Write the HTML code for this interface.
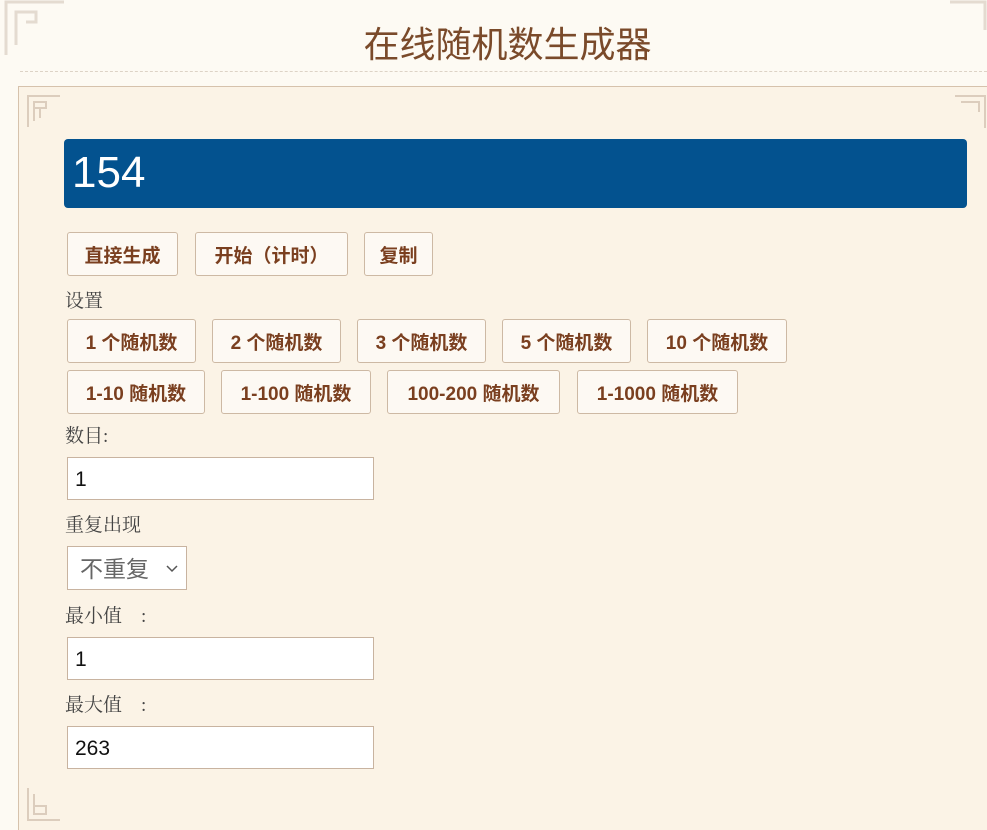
<!DOCTYPE html>
<html><head><meta charset="utf-8"><style>
*{box-sizing:border-box;margin:0;padding:0}
html,body{width:987px;height:830px;overflow:hidden}
body{background:#fdfaf3;font-family:"Liberation Sans","Noto Sans CJK SC",sans-serif;position:relative}
h1{position:absolute;top:16px;left:0;width:1015px;text-align:center;font-weight:normal;font-size:36px;color:#7a4a2a;font-family:"Liberation Sans","Noto Sans CJK SC",sans-serif}
.dash{position:absolute;top:71px;left:20px;width:967px;border-top:1px dashed #ddd3c6}
.panel{position:absolute;top:86px;left:18px;width:1000px;height:760px;background:#fbf3e6;border:1px solid #d6c2ac}
.num{position:absolute;left:64px;top:139px;width:903px;height:69px;background:#03528f;border-radius:4px;color:#fff;font-size:44px;padding:10px 0 0 8px;line-height:48px}
.btn{position:absolute;height:44px;border:1px solid #cdb9a4;border-radius:3px;background:#fdf9f3;color:#7a3f1f;font-weight:bold;font-size:19px;text-align:center;line-height:47px}
.lbl{position:absolute;left:65px;font-size:19px;color:#444;font-family:"Liberation Serif","Noto Serif CJK SC",serif}
.inp{position:absolute;left:67px;width:307px;height:43px;background:#fff;border:1px solid #c8b3a0;font-size:21px;padding-left:7px;line-height:43px;color:#111}
.sel{position:absolute;left:67px;top:546px;width:120px;height:44px;background:#fff;border:1px solid #c8b3a0;font-size:23px;color:#666;padding-left:12px;line-height:44px}
</style></head><body>
<svg style="position:absolute;left:4px;top:0" width="60" height="56"><g stroke="#e4dbd0" stroke-width="3" fill="none"><path d="M2 55V2h58M12 45V12h20v10H22"/></g></svg>
<svg style="position:absolute;left:950px;top:0" width="37" height="30"><g stroke="#e4dbd0" stroke-width="3" fill="none"><path d="M0 2h35v28"/></g></svg>
<h1>在线随机数生成器</h1>
<div class="dash"></div>
<div class="panel"></div>
<svg style="position:absolute;left:26px;top:94px" width="36" height="34"><g stroke="#dccdbd" stroke-width="2" fill="none"><path d="M2 33V2h32M8 27V8h12v6H8M14 14v10"/></g></svg>
<svg style="position:absolute;left:955px;top:94px" width="32" height="34"><g stroke="#dccdbd" stroke-width="2" fill="none"><path d="M0 2h30v32M6 8h18v10"/></g></svg>
<svg style="position:absolute;left:26px;top:788px" width="36" height="34"><g stroke="#dccdbd" stroke-width="2" fill="none"><path d="M2 0v32h32M8 6v20h12v-8H8"/></g></svg>
<div class="num">154</div>
<div class="btn" style="left:67px;top:232px;width:111px">直接生成</div>
<div class="btn" style="left:195px;top:232px;width:153px">开始（计时）</div>
<div class="btn" style="left:364px;top:232px;width:69px">复制</div>
<div class="lbl" style="top:286px">设置</div>
<div class="btn" style="left:67px;top:319px;width:129px">1 个随机数</div>
<div class="btn" style="left:212px;top:319px;width:129px">2 个随机数</div>
<div class="btn" style="left:357px;top:319px;width:129px">3 个随机数</div>
<div class="btn" style="left:502px;top:319px;width:129px">5 个随机数</div>
<div class="btn" style="left:647px;top:319px;width:140px">10 个随机数</div>
<div class="btn" style="left:67px;top:370px;width:138px">1-10 随机数</div>
<div class="btn" style="left:221px;top:370px;width:150px">1-100 随机数</div>
<div class="btn" style="left:387px;top:370px;width:173px">100-200 随机数</div>
<div class="btn" style="left:577px;top:370px;width:161px">1-1000 随机数</div>
<div class="lbl" style="top:421px">数目:</div>
<div class="inp" style="top:457px">1</div>
<div class="lbl" style="top:510px">重复出现</div>
<div class="sel">不重复<svg style="position:absolute;right:8px;top:18px" width="12" height="8"><path d="M1 1l5 5 5-5" stroke="#555" stroke-width="1.5" fill="none"/></svg></div>
<div class="lbl" style="top:601px">最小值&nbsp;&nbsp;&nbsp;&nbsp;:</div>
<div class="inp" style="top:637px">1</div>
<div class="lbl" style="top:690px">最大值&nbsp;&nbsp;&nbsp;&nbsp;:</div>
<div class="inp" style="top:726px">263</div>
</body></html>
